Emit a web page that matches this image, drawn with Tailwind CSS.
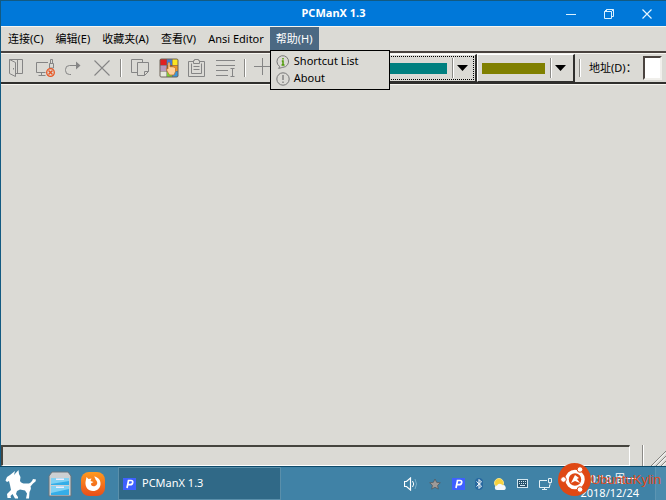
<!DOCTYPE html>
<html lang="zh-CN">
<head>
    <meta charset="UTF-8">
    <meta name="viewport" content="width=device-width, initial-scale=1.0">
    <title>PCManX 1.3</title>
    <script src="https://cdn.jsdelivr.net/npm/@tailwindcss/browser@4"></script>
</head>
<body class="h-screen overflow-hidden flex flex-col bg-[#dbdad5] text-black text-[11px] font-['Noto_Sans','Noto_Sans_CJK_SC',sans-serif]">
    <div class="flex-1 min-h-0 flex flex-col border-l border-t border-[#125a82]">
        <!-- Title bar -->
        <header class="relative h-[25px] shrink-0 bg-[#0078d9] text-white flex items-center justify-center">
            <h1 class="font-bold text-[11px]">PCManX 1.3</h1>
            <div class="absolute right-0 inset-y-0 flex items-center">
                <button type="button" aria-label="Minimize" class="w-[38px] flex justify-center">
                    <svg class="w-3 h-3" viewBox="0 0 12 12" fill="none" stroke="#d9f1ff"><path d="M1 6.500h10"/></svg>
                </button>
                <button type="button" aria-label="Restore" class="w-[38px] flex justify-center">
                    <svg class="w-3 h-3" viewBox="0 0 12 12" fill="none" stroke="#d9f1ff"><path d="M1.500 3.500h7v7h-7zM3.500 3.500v-2h7v7h-2M1.500 3.500l2-2M8.500 3.500l2-2"/></svg>
                </button>
                <button type="button" aria-label="Close" class="w-[38px] flex justify-center">
                    <svg class="w-3 h-3" viewBox="0 0 12 12" fill="none" stroke="#e6f6ff" stroke-width="1.200"><path d="M1.500 1.500l9 9M10.500 1.500l-9 9"/></svg>
                </button>
            </div>
        </header>

        <!-- Menu bar -->
        <nav class="h-[27px] shrink-0 flex items-stretch pl-px border-t border-t-[#f6f5f0] border-b-2 border-b-[#4a433f] whitespace-nowrap">
            <button type="button" class="px-[6px]">连接(C)</button>
            <button type="button" class="px-[6px]">编辑(E)</button>
            <button type="button" class="px-[6px]">收藏夹(A)</button>
            <button type="button" class="px-[6px]">查看(V)</button>
            <button type="button" class="px-[6px]">Ansi Editor</button>
            <div class="relative flex">
                <button type="button" class="px-[6px] bg-[#4b6983] text-white">帮助(H)</button>
                <div class="absolute left-0 top-full z-10 w-[120px] h-10 -mt-px border border-black bg-[#dbdad5] flex flex-col py-[2px]">
                    <button type="button" class="flex-1 flex items-center gap-1 pl-[5px]">
                        <svg class="w-[14px] h-[14px]" viewBox="0 0 14 14" fill="none" stroke="#777"><path d="M3.500 11.300A5.800 5.800 0 1 1 7 12.300c-1 0-2 .8-4.500 1 .8-.6 1-1.200 1-2z"/><path d="M7 3v1.500M5.800 6H7v4M5.500 10h3" stroke="#4e9a06" stroke-width="1.500"/></svg>
                        Shortcut List
                    </button>
                    <button type="button" class="flex-1 flex items-center gap-1 pl-[5px]">
                        <svg class="w-[14px] h-[14px]" viewBox="0 0 14 14" fill="none" stroke="#777"><circle cx="7" cy="7" r="6.200"/><path d="M7 3v5M7 9.500v1.500" stroke-width="1.300"/></svg>
                        About
                    </button>
                </div>
            </div>
        </nav>

        <!-- Toolbar -->
        <div class="h-[31px] shrink-0 flex items-center pl-px border-t border-t-[#f6f5f0] border-b-2 border-b-[#302f2d] whitespace-nowrap">
            <div class="w-[114px] shrink-0 grid grid-cols-4 justify-items-center">
                <button type="button" aria-label="Connect"><svg class="w-5 h-5" viewBox="0 0 20 20" fill="none" stroke="#858585"><path d="M3.500 1.500l6 3v14l-6-3zM3.500 1.500h13v14h-7M11.500 1.500v14M7.500 10v1.500"/></svg></button>
                <button type="button" aria-label="Disconnect"><svg class="w-5 h-5" viewBox="0 0 20 20" fill="none" stroke="#858585"><path d="M13 4.500H1.500v10h9M6.500 14.500v3M3.500 17.500h7M14.500 10V5.500h4V10zM15.500 5.500v-4h2v4"/><circle cx="15.500" cy="14.500" r="3.800" stroke="#e95420" stroke-width="1.300"/><path d="M13.500 12.500l4 4M17.500 12.500l-4 4" stroke="#e95420" stroke-width="1.400"/></svg></button>
                <button type="button" aria-label="Reconnect"><svg class="w-5 h-5" viewBox="0 0 20 20" fill="none" stroke="#858585"><path d="M8 16.500H6.500a4 4 0 0 1-4-4v-1a4 4 0 0 1 4-4H14"/><path d="M13 3.500v8l4.500-4z" fill="#858585" stroke="none"/></svg></button>
                <button type="button" aria-label="Close tab"><svg class="w-5 h-5" viewBox="0 0 20 20" fill="none" stroke="#858585" stroke-width="1.100"><path d="M2.500 2.500l15 15M17.500 2.500l-15 15"/></svg></button>
            </div>
            <div class="shrink-0 mx-1 h-[18px] w-[2px] bg-[#8b8a86] border-r border-white"></div>
            <div class="w-[114px] shrink-0 grid grid-cols-4 justify-items-center">
                <button type="button" aria-label="Copy"><svg class="w-5 h-5" viewBox="0 0 20 20" fill="none" stroke="#858585"><path d="M7.500 14.500h-6v-13h11v3M7.500 4.500h11v9l-4 4h-7zM14.500 17.500v-4h4"/></svg></button>
                <button type="button" aria-label="Copy with color"><svg class="w-5 h-5" viewBox="0 0 20 20"><rect x=".5" y=".5" width="19" height="19" rx="2" fill="#6c6258"/><path d="M1.500 1.500h6v5.500h-6z" fill="#df2020"/><path d="M8 1.500h5V7H8z" fill="#4778d0"/><path d="M13.500 1.500h5V7h-5z" fill="#fce520"/><path d="M1.500 7.500h6V13h-6z" fill="#b796bd"/><path d="M8 7.500h5V13H8z" fill="#8c5b25"/><path d="M13.500 7.500h5V13h-5z" fill="#ef9620"/><path d="M1.500 13.500h6v5h-6z" fill="#e5e9dc"/><path d="M8 13.500h5v5H8z" fill="#7bd035"/><path d="M13.500 13.500h5v5h-5z" fill="#3996dc"/><path d="M9 5q1-1.500 2 0v4q1-1 2 0 1-.8 2 .3 1.200-.4 1.500 1.200v3L15 17h-4.500L8 13l-.8-2.500 1.800.5z" fill="#ffd09a" stroke="#b96b25" stroke-width=".7"/></svg></button>
                <button type="button" aria-label="Paste"><svg class="w-5 h-5" viewBox="0 0 20 20" fill="none" stroke="#858585"><path d="M6 3.500H1.500v15h16v-15H13M6.500 5.500v-3h1v-1h4v1h1v3zM4.500 5.500v10h10v-10M6.500 8.500h6M6.500 11.500h6"/></svg></button>
                <button type="button" aria-label="Select all"><svg class="w-5 h-5" viewBox="0 0 20 20" fill="none" stroke="#858585"><path d="M0 2.500h19M0 7.500h19M0 12.500h12M0 17.500h12M14.500 10.500h4M16.500 10.500v8M14.500 18.500h4"/></svg></button>
            </div>
            <div class="shrink-0 mx-1 h-[18px] w-[2px] bg-[#8b8a86] border-r border-white"></div>
            <div class="w-[129px] shrink-0 pl-[2px]">
                <button type="button" aria-label="Add to favorites"><svg class="w-5 h-5" viewBox="0 0 20 20" fill="none" stroke="#858585"><path d="M10.500 2v17M2 10.500h17"/></svg></button>
            </div>

            <!-- Color pickers -->
            <div class="relative shrink-0 w-[98px] h-7 border-t border-l border-t-white border-l-white border-r-2 border-b border-[#302f2d]">
                <select aria-label="Text color" class="absolute inset-0 appearance-none text-transparent">
                    <option>Cyan</option>
                </select>
                <div class="absolute inset-0 m-px border border-dotted border-black pointer-events-none flex items-center">
                    <span class="flex-1 h-[11px] bg-[#008080] mr-[5px]"></span>
                    <span class="h-5 w-[2px] bg-[#8b8a86] border-r border-white"></span>
                    <svg class="w-[11px] h-[6px] ml-[3px] mr-[5px]" viewBox="0 0 11 6"><path d="M0 0h11L5.500 6z"/></svg>
                </div>
            </div>
            <div class="relative shrink-0 w-[98px] h-7 border-t border-l border-t-white border-l-white border-r-2 border-b border-[#302f2d]">
                <select aria-label="Background color" class="absolute inset-0 appearance-none text-transparent">
                    <option>Olive</option>
                </select>
                <div class="absolute inset-0 pl-1 pr-[2px] pointer-events-none flex items-center">
                    <span class="flex-1 h-[11px] bg-[#808000] mr-[5px]"></span>
                    <span class="h-5 w-[2px] bg-[#8b8a86] border-r border-white"></span>
                    <svg class="w-[11px] h-[6px] ml-[3px] mr-[5px]" viewBox="0 0 11 6"><path d="M0 0h11L5.500 6z"/></svg>
                </div>
            </div>
            <div class="shrink-0 ml-1 mr-2 h-[18px] w-[2px] bg-[#8b8a86] border-r border-white"></div>
            <label for="address" class="shrink-0 pr-[6px]">地址(D)：</label>
            <input id="address" type="text" class="flex-1 min-w-0 h-6 mr-1 bg-white border-2 border-t-[#4a433f] border-l-[#4a433f] border-r-[#f0efeb] border-b-[#f0efeb]">
        </div>

        <main class="flex-1 border-t border-t-[#f6f5f0]"></main>

        <!-- Status bar -->
        <footer class="h-[21px] shrink-0 flex">
            <div class="flex-1 border-t-2 border-l-2 border-[#45443e] border-r border-r-white border-b border-b-white"></div>
            <div class="w-3"></div>
            <div class="w-[2px] bg-[#8b8a86] border-r border-white"></div>
            <div class="w-[22px] flex items-end justify-end">
                <svg class="w-4 h-4" viewBox="0 0 16 16" fill="none" stroke="#858480"><path d="M1 16L16 1M6 16L16 6M11 16l5-5"/><path d="M2.500 16L16 2.500M7.500 16L16 7.500M12.500 16l3.500-3.500" stroke="#fff"/></svg>
            </div>
        </footer>
    </div>

    <!-- Taskbar -->
    <div class="relative h-[34px] shrink-0 flex items-center bg-[#4082a6] border-t border-t-[#0d4a6a] text-white">
        <button type="button" aria-label="Start" class="ml-[5px]">
            <svg class="w-8 h-8" viewBox="0 0 32 32" fill="#fff"><path d="M13.500 2l.5 4 1.500 3-.5 4c1 2 3 2.500 5 2.500h4c1.500-.5 2-1.500 3-2.500l1-2 3 .5-.5 2-2.500 2-2.500 3c1 2 0 3.500-1 5.500l-.5 6.500h-3l1-5-2-3-5-1-3 1.500-1 3 2 3v1.500h-3L7.500 26l-2 2 .5 2H2.500L2 26l4-4-1-5-1-4-2 1-1.500-1.500L2 9l3-2 5-4-1 4z"/></svg>
        </button>
        <button type="button" aria-label="Files" class="ml-[11px]">
            <svg class="w-6 h-[26px]" viewBox="0 0 24 26"><path d="M4 1h16l3 4v20H1V5z" fill="#ccd0d2" stroke="#68757c"/><path d="M3 7h18v7H3z" fill="#35aee8"/><path d="M3 15h18v9H3z" fill="#35aee8"/><path d="M3 7h18v3L3 13zM3 15h18v3L3 22z" fill="#7fd2f4"/><path d="M8 7.500h8v1.500H8zM8 15.500h8V17H8z" fill="#eef"/></svg>
        </button>
        <button type="button" aria-label="Firefox" class="ml-[9px]">
            <svg class="w-6 h-6" viewBox="0 0 24 24"><defs><linearGradient id="fox" x2="0" y2="1"><stop stop-color="#ff9a1f"/><stop offset="1" stop-color="#e94e1b"/></linearGradient></defs><rect width="24" height="24" rx="8" fill="url(#fox)"/><path d="M5.500 5l2 2 3-.5-1 2.500 3 1-2.500 1.500c-.5 2.500 3 4 5.500 1.500 1.500-2 .5-4-1-5.500 0-1.500-1.500-3-1.500-3 4.500.5 7 4 6.500 8-.5 4-3.500 6.500-7.500 6.500-5 0-8-4-7.500-9z" fill="#fff"/></svg>
        </button>
        <button type="button" class="ml-[13px] w-[163px] self-stretch flex items-center gap-[6px] pl-1 bg-[#306987] border border-[#5a8faa]">
            <svg class="w-[13px] h-3" viewBox="0 0 13 12"><path d="M0 0h13v12H0z" fill="#3e60ff"/><path d="M4 10L5.500 2.500H8q2 0 1.700 2Q9.300 6.700 7 6.700H5" fill="none" stroke="#fff" stroke-width="1.700"/></svg>
            PCManX 1.3
        </button>

        <!-- Tray -->
        <div class="ml-auto mr-[103px] flex items-center gap-[10px]">
            <svg class="w-[14px] h-[14px]" viewBox="0 0 14 14" fill="none" stroke="#fff"><path d="M.5 4.500h2l4-3.500v12l-4-3.500h-2z" stroke-width="1.200"/><path d="M8.500 4q2.500 3 0 6"/><path d="M11 2q3 5 0 10" stroke="#7baec7"/></svg>
            <svg class="w-[14px] h-[14px]" viewBox="0 0 14 14"><path d="M7 2l1.600 3.300 3.700.5-2.700 2.600.7 3.700L7 10.300l-3.300 1.800.7-3.700-2.700-2.600 3.700-.5z" fill="#9e9a98" stroke="#4f5357" stroke-width=".7"/></svg>
            <svg class="w-[13px] h-3" viewBox="0 0 13 12"><path d="M0 0h13v12H0z" fill="#3e60ff"/><path d="M4 10L5.500 2.500H8q2 0 1.700 2Q9.300 6.700 7 6.700H5" fill="none" stroke="#fff" stroke-width="1.700"/></svg>
            <svg class="w-2 h-3" viewBox="0 0 8 12" fill="none" stroke="#fff"><rect width="8" height="12" rx="4" fill="#2869a0" stroke="none"/><path d="M1.500 3.500l5 4.500L4 10.500v-9L6.500 4l-5 4.500"/></svg>
            <svg class="w-[14px] h-[14px]" viewBox="0 0 14 14"><circle cx="6" cy="6" r="4.500" fill="#f7d23e" stroke="#f5e28a"/><path d="M4 13a2.200 2.200 0 0 1 0-4.400 3 3 0 0 1 5.500-.3A2.400 2.400 0 1 1 11 13z" fill="#f4f7fa"/></svg>
            <svg class="w-[11px] h-[10px]" viewBox="0 0 11 10" fill="none" stroke="#d3e7f0"><rect x=".5" y=".5" width="10" height="8" fill="#28536d"/><path d="M2 2.500h7M2 4.500h7" stroke-dasharray="1 1"/><path d="M3 6.500h5"/></svg>
            <svg class="w-[14px] h-[14px]" viewBox="0 0 14 14" fill="none" stroke="#e4f0f5"><path d="M9 3.500H1.500v7h10V8M6.500 10.500v2M4 12.500h5M10.500 1.500h3v4h-3zM12 5.500v3"/></svg>
        </div>
        <button type="button" aria-label="Show desktop" class="w-[11px] self-stretch border-l border-[#5d95b3] bg-[#4b8bad]"></button>

        <div class="absolute right-[27px] top-[5px] text-center text-[11px] leading-[14px] whitespace-nowrap">
            <div>10:18 周一</div>
            <div>2018/12/24</div>
        </div>
        <!-- Distribution badge over the clock -->
        <div class="absolute right-[5px] -top-[4px] flex items-center text-[#e24a18]">
            <svg class="w-[33px] h-[33px]" viewBox="0 0 33 33"><circle cx="16.500" cy="16.500" r="16.500" fill="#df4814"/><circle cx="17" cy="16.500" r="8" fill="none" stroke="#fff" stroke-width="3.500"/><g fill="#fff" stroke="#df4814"><circle cx="5.500" cy="16.500" r="2.800"/><circle cx="22" cy="6.500" r="2.800"/><circle cx="22" cy="26.500" r="2.800"/></g><path d="M17 12l4 3-2 1 3 4-5-2-4 2 2-4z" fill="#fff"/></svg>
            <span class="text-[13px] leading-4 font-medium font-['Liberation_Sans',sans-serif]">UbuntuKylin</span>
        </div>
    </div>
</body>
</html>
